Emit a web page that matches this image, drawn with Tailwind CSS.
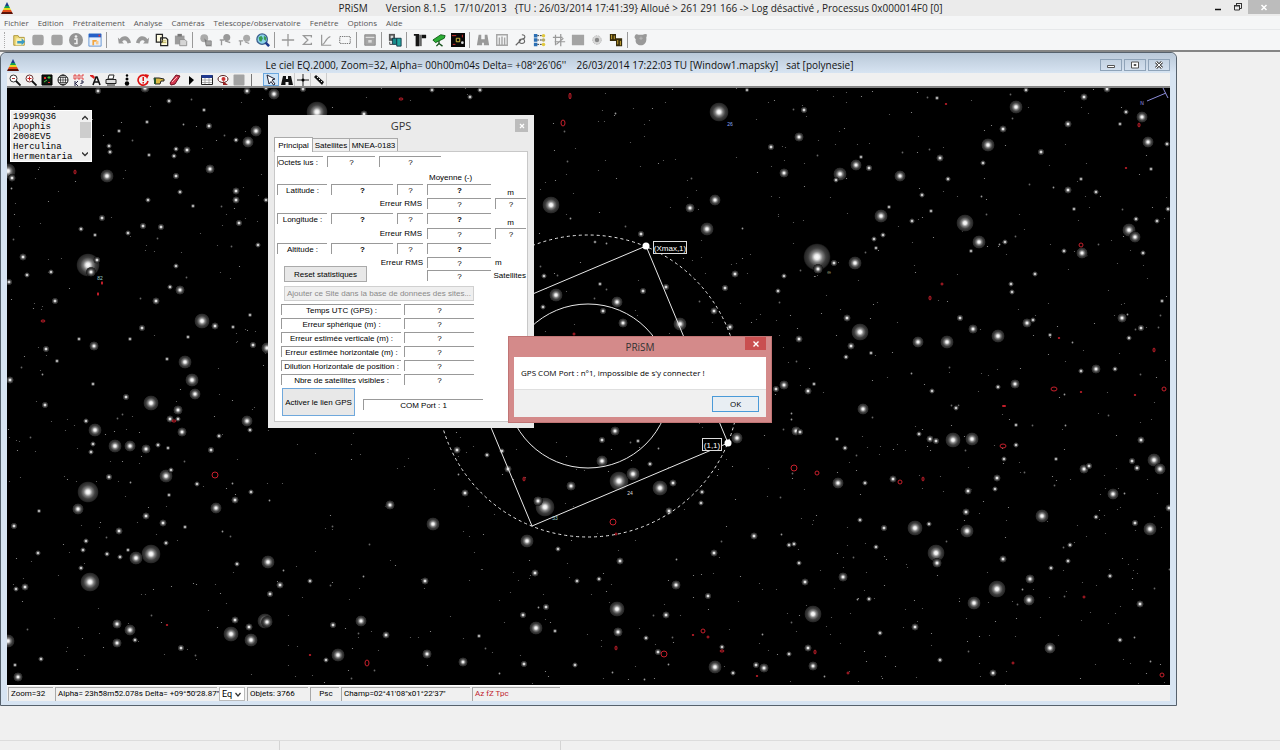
<!DOCTYPE html>
<html lang="fr">
  <head>
    <meta charset="UTF-8" />
    <meta name="viewport" content="width=device-width, initial-scale=1.0" />
    <title>PRiSM</title>
    <script src="https://cdn.jsdelivr.net/npm/@tailwindcss/browser@4"></script>
  </head>
  <body class="bg-[#f0f0f0] font-['Open_Sans','Noto_Sans',sans-serif] text-[#222]">
    <div class="flex h-screen flex-col overflow-hidden">
      <!-- Application title bar -->
      <header class="relative flex h-4 shrink-0 items-center bg-[#ebebeb]">
        <svg class="ml-px h-3 w-3" viewBox="0 0 12 12">
          <path d="M6 0L8 4H4z" fill="#173a8a" /><path d="M4 4h4l1 2H3z" fill="#15a050" /><path d="M3 6h6l1 2H2z" fill="#e8d820" /><path d="M2 8h8l1 2H1z" fill="#e04a1a" /><path d="M1 10h10l1 2H0z" fill="#5a1208" />
        </svg>
        <h1 class="flex-1 pr-3 text-center text-[10px] leading-4 whitespace-pre">PRiSM       Version 8.1.5   17/10/2013   {TU : 26/03/2014 17:41:39} Alloué > 261 291 166 -> Log désactivé , Processus 0x000014F0 [0]</h1>
        <div class="absolute top-0 right-0 flex h-[14px] items-stretch">
          <button aria-label="Réduire" class="flex w-5 items-center justify-center"><svg class="h-3 w-3" viewBox="0 0 12 12"><path d="M3 8.500h6" stroke="#111" stroke-width="1.500" /></svg></button>
          <button aria-label="Restaurer" class="flex w-5 items-center justify-center"><svg class="h-3 w-3" viewBox="0 0 12 12" fill="none" stroke="#333"><path d="M2.500 5h5v4h-5zM2 4.500h6M4.500 4V2.500h5v5H8M4 2.500h6" /></svg></button>
          <button aria-label="Fermer" class="flex w-8 items-center justify-center bg-[#bcbcbc]"><svg class="h-3 w-3" viewBox="0 0 12 12"><path d="M3.500 4l5 5m0-5l-5 5" stroke="#fff" stroke-width="1.500" /></svg></button>
        </div>
      </header>

      <!-- Menu -->
      <nav class="flex h-[14px] shrink-0 items-center gap-[9px] border-b border-[#e6e8ea] bg-[#f5f6f7] px-1 text-[8px] leading-3 text-[#555]">
        <a href="#">Fichier</a>
        <a href="#">Edition</a>
        <a href="#">Prétraitement</a>
        <a href="#">Analyse</a>
        <a href="#">Caméras</a>
        <a href="#">Telescope/observatoire</a>
        <a href="#">Fenêtre</a>
        <a href="#">Options</a>
        <a href="#">Aide</a>
      </nav>

      <!-- Main toolbar -->
      <div class="flex h-[22px] shrink-0 items-center border-b-2 border-[#858585] bg-[#f5f6f7] pl-1 [&>button]:flex [&>button]:w-[19px] [&>button]:justify-center [&_svg]:h-[14px] [&_svg]:w-[14px]">
        <span class="mr-1 h-4 border-l border-dotted border-[#aaa]"></span>
        <button aria-label="Ouvrir"><svg viewBox="0 0 16 16"><path d="M2 3h5l1 2h6v9H2z" fill="#ecd775" stroke="#a89030" /><path d="M5 6h9l-1 8H4z" fill="#f8efb0" /><path d="M6 9h5V6l4 4-4 4v-2H6z" fill="#3a9bc4" /></svg></button>
        <button aria-label="Enregistrer"><svg viewBox="0 0 16 16"><rect x="1.500" y="2" width="13" height="12" rx="2.500" fill="#a3a3a3" /></svg></button>
        <button aria-label="Tout enregistrer"><svg viewBox="0 0 16 16"><rect x="1.500" y="2" width="13" height="12" rx="2.500" fill="#a3a3a3" /></svg></button>
        <button aria-label="Informations"><svg viewBox="0 0 16 16"><circle cx="8" cy="8" r="8" fill="#949494" /><circle cx="8" cy="4" r="1.500" fill="#eee" /><path d="M6 7h3v5h1M6 12h4" stroke="#eee" stroke-width="1.800" fill="none" /></svg></button>
        <button aria-label="Calendrier"><svg viewBox="0 0 16 16"><path d="M1 1h14v14H1z" fill="#e8f0fb" stroke="#5b8fd0" /><path d="M1 1h14v4H1z" fill="#2560c8" /><path d="M12 2h2v2h-2z" fill="#e33" /><path d="M5 8h5v2H7v4H5z" fill="#f2a640" /><path d="M9 9h3v4H9z" fill="#f7c98c" /></svg></button>
        <span class="mr-[7px] ml-[2px] h-4 w-px bg-[#999]"></span>
        <button aria-label="Annuler"><svg viewBox="0 0 16 16"><path d="M1 5l1 7h6L6 10c2-3 5-2 6 2l4-1C14 2 6 2 3 7z" fill="#999" /></svg></button>
        <button aria-label="Rétablir"><svg viewBox="0 0 16 16"><path d="M15 5l-1 7H8l2-2c-2-3-5-2-6 2l-4-1C2 2 10 2 13 7z" fill="#999" /></svg></button>
        <button aria-label="Copier"><svg viewBox="0 0 16 16"><path d="M1.500 1.500h7v9h-7zM6.500 5.500h6l2 2v7h-8z" fill="#fffce0" stroke="#222" stroke-width="1.400" /><path d="M8 9h5M8 11h5" stroke="#b4a94a" /></svg></button>
        <button aria-label="Coller"><svg viewBox="0 0 16 16"><path d="M1 3h11v10H1z" fill="#9b9b9b" /><path d="M4 1h5v3H4z" fill="#777" /><path d="M6.500 7.500h6l2 2v5h-8z" fill="#d5d5d5" stroke="#8b8b8b" /></svg></button>
        <span class="mr-[3px] ml-[2px] h-4 w-px bg-[#999]"></span>
        <button aria-label="Détection"><svg viewBox="0 0 16 16"><circle cx="6" cy="6" r="4.500" fill="#aaa" /><path d="M6 6l9 9h-7z" fill="#777" /><path d="M8 9h6v5H8z" fill="#a5a5a5" stroke="#888" /></svg></button>
        <button aria-label="Photométrie"><svg viewBox="0 0 16 16"><circle cx="10" cy="5" r="4" fill="#999" /><path d="M7 8H2m2 0v6M8 9l6 2" fill="none" stroke="#999" stroke-width="1.500" /></svg></button>
        <button aria-label="Astrométrie"><svg viewBox="0 0 16 16"><circle cx="11" cy="6" r="4" fill="#aaa" /><path d="M7 9H2m2 0v5M9 10l5 2" fill="none" stroke="#999" stroke-width="1.500" /></svg></button>
        <button aria-label="Ciel"><svg viewBox="0 0 16 16"><circle cx="7" cy="7" r="6" fill="#8ad3ea" stroke="#3c5f8e" stroke-width="1.500" /><path d="M3 5l3-2 2 3-2 4-2-1zM9 3l3 2-1 4-2-2z" fill="#3c9d52" /><path d="M11 11l4 4" stroke="#1d3c8c" stroke-width="3" /></svg></button>
        <span class="mr-[3px] ml-[2px] h-4 w-px bg-[#999]"></span>
        <button aria-label="Croix"><svg viewBox="0 0 16 16"><path d="M8 1v14M1 8h14" stroke="#999" stroke-width="1.500" /></svg></button>
        <button aria-label="Somme"><svg viewBox="0 0 16 16"><path d="M13 5V3H4l5 5-5 5h9v-2" fill="none" stroke="#999" stroke-width="1.500" /></svg></button>
        <button aria-label="Courbe"><svg viewBox="0 0 16 16"><path d="M3 2v12h11M4 13c3 0 3-7 9-9" fill="none" stroke="#999" stroke-width="1.400" /></svg></button>
        <button aria-label="Sélection"><svg viewBox="0 0 16 16"><path d="M2 4h12v8H2z" fill="none" stroke="#777" stroke-dasharray="1.500 1" stroke-width="1.200" /></svg></button>
        <span class="mr-[3px] ml-[2px] h-4 w-px bg-[#999]"></span>
        <button aria-label="Archive"><svg viewBox="0 0 16 16"><path d="M2 2h12v12H2z" fill="#a5a5a5" stroke="#888" /><path d="M3 5h10" stroke="#eee" /><path d="M6 8h4v3H6z" fill="#ddd" /></svg></button>
        <span class="mr-[3px] ml-[2px] h-4 w-px bg-[#999]"></span>
        <button aria-label="Caméra"><svg viewBox="0 0 16 16"><path d="M1 1h7v8H1z" fill="#555" /><path d="M3 3h3v3H3z" fill="#ddd" /><path d="M5 6h5v7H5z" fill="#18898a" stroke="#134" /><path d="M10 6h5v9h-5z" fill="#21a79f" stroke="#134" /><path d="M2 10v3h3" fill="none" stroke="#333" /></svg></button>
        <span class="mr-[3px] ml-[2px] h-4 w-px bg-[#999]"></span>
        <button aria-label="Monture"><svg viewBox="0 0 16 16"><path d="M1 1h6v2H1zM3 3h4v12H3z" fill="#161616" /><path d="M7 2h3v13H7z" fill="#666" /><path d="M10 2h5v4h-5z" fill="#111" /></svg></button>
        <button aria-label="Télescope"><svg viewBox="0 0 16 16"><path d="M1 8l9-6 5 1-1 3-10 5z" fill="#2cae35" stroke="#0d5313" /><path d="M8 9v3m0 0l-3 3m3-3l4 3" stroke="#14501a" stroke-width="1.500" /></svg></button>
        <button aria-label="Guidage"><svg viewBox="0 0 16 16"><path d="M0 0h16v16H0z" fill="#080808" /><path d="M1 3h5M2 13h3M13 2v3" stroke="#e8322f" /><path d="M6 6h4v4H6z" fill="none" stroke="#e5cf45" /><circle cx="13" cy="11" r="1.500" fill="#ddd" /></svg></button>
        <span class="mr-[3px] ml-[2px] h-4 w-px bg-[#999]"></span>
        <button aria-label="Recherche"><svg viewBox="0 0 16 16"><path d="M3 2h3v5h4V2h3l2 12H9v-3H7v3H1z" fill="#999" /></svg></button>
        <button aria-label="Colonnes"><svg viewBox="0 0 16 16"><path d="M2 2h12v12H2zM5 5v9M8 4v10M11 5v9" fill="none" stroke="#a5a5a5" stroke-width="1.600" /></svg></button>
        <button aria-label="Outil"><svg viewBox="0 0 16 16"><path d="M9 2c5 0 4 5 0 5s-4 5 0 5 4-4 1-6M8 8l-6 6" fill="none" stroke="#666" stroke-width="1.300" /></svg></button>
        <button aria-label="Réseau"><svg viewBox="0 0 16 16"><path d="M1 1h4v4H1zM1 6h4v4H1zM1 11h4v4H1z" fill="#2b6fb4" /><path d="M5 3h6M5 8h6M5 13h6" stroke="#222" stroke-dasharray="2 1" /><circle cx="12" cy="3" r="2" fill="#e2c93e" /><circle cx="12" cy="8" r="2" fill="#b4aa68" /><circle cx="12" cy="13" r="2" fill="#e2c93e" /></svg></button>
        <button aria-label="Grille"><svg viewBox="0 0 16 16"><path d="M4 2v12M10 1v14M1 5h11M3 10h12M13 6l-8 7" stroke="#999" stroke-width="1.400" /></svg></button>
        <button aria-label="Image"><svg viewBox="0 0 16 16"><path d="M1 2h14v12H1z" fill="#a3a3a3" /></svg></button>
        <button aria-label="Dôme"><svg viewBox="0 0 16 16"><circle cx="8" cy="8" r="5" fill="#d7d7d7" stroke="#aaa" stroke-dasharray="1 1" /><circle cx="8" cy="8" r="2.500" fill="#888" /></svg></button>
        <button aria-label="Mosaïque"><svg viewBox="0 0 16 16"><path d="M1 1h7v8H1zM8 6h7v9H8z" fill="#372c0c" /><path d="M3 2v5m3-4v4m4 1v5m3-4v5" stroke="#d8b437" /></svg></button>
        <span class="mr-[3px] ml-[2px] h-4 w-px bg-[#999]"></span>
        <button aria-label="Aide"><svg viewBox="0 0 16 16"><path d="M1 3c1-2 3-2 4-1h5c2-1 4-1 5 0-1 1 0 2-1 3 1 5-2 9-6 9S1 11 2 7C1 6 0 5 1 3z" fill="#999" /><path d="M6 6h4M8 4v4" stroke="#bbb" /></svg></button>
      </div>

      <!-- Sky map window -->
      <main class="mr-[103px] mb-[34px] flex min-h-0 flex-1 flex-col rounded-t-md border border-[#56616c] bg-[#d7e4f2] px-[6px] pb-1">
        <div class="-mx-[6px] flex h-5 shrink-0 items-center rounded-t-md bg-linear-to-b from-[#b9c8d8] to-[#d7e4f2] px-[6px] pt-1">
          <svg class="h-3 w-3" viewBox="0 0 12 12">
            <path d="M6 0L8 4H4z" fill="#173a8a" /><path d="M4 4h4l1 2H3z" fill="#15a050" /><path d="M3 6h6l1 2H2z" fill="#e8d820" /><path d="M2 8h8l1 2H1z" fill="#e04a1a" /><path d="M1 10h10l1 2H0z" fill="#5a1208" />
          </svg>
          <h2 class="flex-1 text-center text-[10px] leading-4 whitespace-pre text-[#111]">Le ciel EQ.2000, Zoom=32, Alpha= 00h00m04s Delta= +08°26'06''    26/03/2014 17:22:03 TU [Window1.mapsky]   sat [polynesie]</h2>
          <div class="flex gap-[2px] [&>button]:flex [&>button]:h-3 [&>button]:w-[22px] [&>button]:items-center [&>button]:justify-center [&>button]:border [&>button]:border-[#8fa3b8] [&_svg]:h-[10px] [&_svg]:w-[10px]">
            <button aria-label="Réduire la carte"><svg viewBox="0 0 10 10"><path d="M1.500 5.500h7v2h-7z" fill="#fff" stroke="#555" /></svg></button>
            <button aria-label="Agrandir la carte"><svg viewBox="0 0 10 10"><path d="M1.500 2h7v6h-7z" fill="#fff" stroke="#555" /><path d="M4 4.500h2v1H4z" fill="#fff" stroke="#555" /></svg></button>
            <button aria-label="Fermer la carte"><svg viewBox="0 0 10 10"><path d="M2 2l6 6m0-6L2 8" stroke="#555" stroke-width="3" /><path d="M2 2l6 6m0-6L2 8" stroke="#fff" /></svg></button>
          </div>
        </div>

        <div class="flex h-[15px] shrink-0 items-center border-b-2 border-[#858585] bg-[#f0f0f0] [&>button]:flex [&>button]:h-[13px] [&>button]:w-4 [&>button]:items-center [&>button]:justify-center [&_svg]:h-3 [&_svg]:w-3">
          <button aria-label="Zoom arrière"><svg viewBox="0 0 12 12"><circle cx="4.500" cy="4.500" r="3.500" fill="#fff" stroke="#333" /><path d="M7 7l4.500 4.500" stroke="#111" stroke-width="1.800" /><path d="M3 4.500h3" stroke="#a33" /></svg></button>
          <button aria-label="Zoom avant"><svg viewBox="0 0 12 12"><circle cx="4.500" cy="4.500" r="3.500" fill="#fff" stroke="#633" /><path d="M7 7l4.500 4.500" stroke="#111" stroke-width="1.800" /><path d="M2.500 4.500h4m-2-2v4" stroke="#c22" /></svg></button>
          <button aria-label="Objets"><svg viewBox="0 0 12 12"><path d="M1 1h10v10H1z" fill="#101810" stroke="#000" /><path d="M3 3h2v2H3zM7 8h2v1H7z" fill="#e33" /><path d="M7 3h2v1H7zM3 8l3-2" fill="#4c4" stroke="#4c4" /></svg></button>
          <button aria-label="Grille céleste"><svg viewBox="0 0 12 12" fill="none" stroke="#111"><circle cx="6" cy="6" r="5" fill="#fff" /><path d="M1 6h10M6 1v10M2 3.500h8M2 8.500h8" stroke-width=".6" /><ellipse cx="6" cy="6" rx="2.500" ry="5" stroke-width=".7" /></svg></button>
          <button aria-label="Noms"><svg viewBox="0 0 12 12" fill="none"><path d="M1 1v4h2V1zM5 1h2v4H5zM11 1H9v4h2" stroke="#d22" stroke-width=".8" /><path d="M2 7v5m0-2l3-3m-2 3l2 2M8 7h2v2H8v1m0 1v1" stroke="#224" /></svg></button>
          <button aria-label="Annotation"><svg viewBox="0 0 12 12"><path d="M1 1h3l2 2-1 2-4-3z" fill="#d22" /><path d="M4 11l3-8h1l3 8M5 8h5" fill="none" stroke="#111" stroke-width="1.600" /></svg></button>
          <button aria-label="Imprimer"><svg viewBox="0 0 12 12"><path d="M4 1h5l-1 4H3z" fill="#fff" stroke="#222" /><path d="M1 5.500h10v4H1z" fill="#ddd" stroke="#222" /><path d="M2 11h8" stroke="#222" /></svg></button>
          <button aria-label="Magnitude"><svg viewBox="0 0 12 12"><circle cx="6" cy="1.500" r="1.200" /><circle cx="6" cy="5" r="1.500" /><circle cx="6" cy="9.500" r="2.200" /></svg></button>
          <button aria-label="Actualiser"><svg viewBox="0 0 12 12"><path d="M10 3a5 5 0 1 0 1 4" fill="none" stroke="#d11" stroke-width="1.600" /><path d="M8 0l4 1-2 4zM5.500 3h1.500v4h-1.500zM5.500 8h1.500v1.500h-1.500z" fill="#d11" /></svg></button>
          <button aria-label="Pointer"><svg viewBox="0 0 12 12"><path d="M1 4h5l5 1v2H8l-1 3H2z" fill="#d9b942" stroke="#222" /><path d="M1 4h2v6H1z" fill="#24542c" /></svg></button>
          <button aria-label="Effacer"><svg viewBox="0 0 12 12"><path d="M1 9l6-8 4 1-5 8-4 1z" fill="#d43a52" stroke="#701020" /><path d="M3 8l5-5" stroke="#fbb" /></svg></button>
          <button aria-label="Lecture"><svg viewBox="0 0 12 12"><path d="M4 2l5 4-5 5z" /></svg></button>
          <button aria-label="Tableau"><svg viewBox="0 0 12 12"><path d="M.5 1.500h11v9H.5z" fill="#fff" stroke="#222" /><path d="M.5 1h11v3H.5z" fill="#203a90" /><path d="M1 6h10M1 8.500h10M4 4v6M8 4v6" stroke="#999" stroke-width=".8" /></svg></button>
          <button aria-label="Oeil"><svg viewBox="0 0 12 12"><ellipse cx="6" cy="5" rx="5" ry="3.500" fill="#fff" stroke="#522" /><circle cx="6.500" cy="5" r="2" fill="#c33" /><path d="M6 7l5 4H6z" fill="#922" /></svg></button>
          <button aria-label="Arrêt"><svg viewBox="0 0 12 12"><rect x=".5" y=".5" width="11" height="11" rx="1" fill="#a3a3a3" /></svg></button>
          <span class="mr-[11px] ml-1 h-3 w-px bg-[#777]"></span>
          <button aria-label="Flèche" class="border border-[#6aa7df] bg-[#cfe4f7]"><svg viewBox="0 0 12 12"><path d="M2 1l8 4-3 1 3 4-1.500 1L6 7.500 4 10z" fill="#fff" stroke="#223" /></svg></button>
          <button aria-label="Jumelles" class="border-r border-[#ccc]"><svg viewBox="0 0 12 12"><path d="M2 2h3v3h2V2h3l2 9H7.500V8h-3v3H0z" fill="#111" /></svg></button>
          <button aria-label="Réticule" class="border-r border-[#ccc]"><svg viewBox="0 0 12 12"><path d="M6 0v12M0 6h12" stroke="#222" /><circle cx="6" cy="6" r="1.500" /></svg></button>
          <button aria-label="Mesure" class="border-r border-[#ccc]"><svg viewBox="0 0 12 12"><path d="M1 3l2-2 8 7-2 3z" fill="#111" /><path d="M4 4l1-1m1 3l1-1m1 3l1-1" stroke="#eee" /></svg></button>
        </div>

        <section class="relative min-h-0 flex-1 overflow-hidden bg-black">
          <svg id="sky" class="absolute inset-0 h-full w-full" viewBox="7 88 1163 597" preserveAspectRatio="xMinYMin slice">
            <defs>
              <radialGradient id="glow">
                <stop offset="0" stop-color="#fff" />
                <stop offset=".18" stop-color="#eaeaea" />
                <stop offset=".4" stop-color="#808080" />
                <stop offset=".65" stop-color="#3e3e3e" />
                <stop offset=".9" stop-color="#262626" />
                <stop offset="1" stop-color="#000" />
              </radialGradient>
            </defs>
            <g id="stars"></g>
            <g id="asteroids" fill="none" stroke="#c8202c"></g>
            <!-- Field of view -->
            <g fill="none" stroke="#e8e8e8">
              <circle cx="588" cy="386" r="82" />
              <circle cx="588" cy="386" r="151" stroke-dasharray="3 3" />
              <path d="M646 246L728 443L532 526L450 329Z" />
            </g>
            <g fill="#fff"><circle cx="646" cy="246" r="3.500" /><circle cx="728" cy="443" r="3.500" /></g>
            <g fill="#000" stroke="#ddd">
              <rect x="653.500" y="241.500" width="33" height="12" />
              <rect x="702.500" y="438.500" width="19" height="12" />
            </g>
            <g fill="#fff" font-family="Liberation Sans, sans-serif" font-size="8" text-anchor="middle">
              <text x="670" y="251">(Xmax,1)</text>
              <text x="712" y="448">(1,1)</text>
            </g>
            <g font-family="Liberation Sans, sans-serif" font-size="5" text-anchor="middle">
              <text x="100" y="280" fill="#9bd0d0">82</text>
              <text x="555" y="520" fill="#9bd0d0">33</text>
              <text x="630" y="495" fill="#ddd">24</text>
              <text x="730" y="126" fill="#88aaff">26</text>
              <text x="829" y="274" fill="#d8d8a0">∞</text>
              <text x="1142" y="105" fill="#9a9af0">N</text>
            </g>
            <path d="M1147 101L1166 93M1163 88L1168 98" stroke="#8c8cd8" fill="none" />
          </svg>

          <!-- Object list -->
          <div class="absolute top-[22px] left-[3px] flex h-[52px] w-[82px] border border-white bg-[#f0f0f0]">
            <ul class="flex-1 overflow-hidden pt-px pl-[2px] font-['Liberation_Mono',monospace] text-[9px] leading-[10px] text-black">
              <li>1999RQ36</li>
              <li>Apophis</li>
              <li>2008EV5</li>
              <li>Herculina</li>
              <li>Hermentaria</li>
            </ul>
            <div class="flex w-3 flex-col items-center justify-between py-1">
              <svg class="h-[6px] w-[6px]" viewBox="0 0 6 6"><path d="M0 4.500l3-3 3 3" fill="none" stroke="#333" stroke-width="1.400" /></svg>
              <span class="mb-3 h-4 w-[11px] bg-[#cdcdcd]"></span>
              <svg class="h-[6px] w-[6px]" viewBox="0 0 6 6"><path d="M0 1.500l3 3 3-3" fill="none" stroke="#333" stroke-width="1.400" /></svg>
            </div>
          </div>

          <!-- GPS window -->
          <div class="absolute top-[27px] left-[261px] flex h-[313px] w-[266px] flex-col bg-[#ebebeb] px-[6px] pb-[6px] font-['Liberation_Sans',sans-serif] text-[8px] leading-[11px] text-black">
            <div class="relative flex h-[21px] shrink-0 items-center justify-center">
              <h3 class="font-['Open_Sans',sans-serif] text-[11px] text-[#333]">GPS</h3>
              <button aria-label="Fermer GPS" class="absolute top-1 right-0 flex h-[13px] w-[13px] items-center justify-center bg-[#bcbcbc]"><svg class="h-2 w-2" viewBox="0 0 8 8"><path d="M2 2l4 4m0-4L2 6" stroke="#fff" stroke-width="1.300" /></svg></button>
            </div>
            <div class="flex h-[15px] shrink-0 items-end whitespace-nowrap">
              <button class="z-10 -mb-px h-[15px] w-[39px] border border-b-0 border-[#aaa] bg-white">Principal</button>
              <button class="h-[13px] w-[37px] border border-b-0 border-l-0 border-[#aaa] bg-[#f0f0f0]">Satellites</button>
              <button class="h-[13px] w-12 border border-b-0 border-l-0 border-[#aaa] bg-[#f0f0f0]">MNEA-0183</button>
            </div>
            <div class="min-h-0 flex-1 border border-[#c8c8c8] bg-white pt-1 pl-[2px] text-center whitespace-nowrap [&_output]:block [&_output]:h-[11px] [&_output]:border-t [&_output]:border-l [&_output]:border-[#999] [&_span]:h-[11px]">
              <div class="flex gap-1">
                <span class="w-[46px] border-t border-l border-[#999] text-left">Octets lus :</span>
                <output class="w-12">?</output>
                <output class="w-[62px]">?</output>
              </div>
              <div class="mt-1 h-[13px] pl-[152px] text-left leading-[13px]">Moyenne (-)</div>
              <div class="grid grid-cols-[50px_62px_26px_64px_31px] grid-rows-[14px_15px_15px_15px_14px_13px_12px] gap-x-1">
                <span class="border-t border-l border-[#999]">Latitude :</span>
                <output class="font-bold">?</output>
                <output>?</output>
                <output class="font-bold">?</output>
                <span class="self-end">m</span>
                <span class="col-span-3 pr-px text-right">Erreur RMS</span>
                <output>?</output>
                <output>?</output>
                <span class="border-t border-l border-[#999]">Longitude :</span>
                <output class="font-bold">?</output>
                <output>?</output>
                <output class="font-bold">?</output>
                <span class="self-end">m</span>
                <span class="col-span-3 pr-px text-right">Erreur RMS</span>
                <output>?</output>
                <output>?</output>
                <span class="border-t border-l border-[#999]">Altitude :</span>
                <output class="font-bold">?</output>
                <output>?</output>
                <output class="font-bold">?</output>
                <span></span>
                <button class="col-span-2 row-span-2 ml-[7px] h-4 w-[83px] self-end border border-[#aaa] bg-[#e8e8e8]">Reset statistiques</button>
                <span class="flex justify-end">Erreur RMS</span>
                <output>?</output>
                <span class="text-left">m</span>
                <output class="col-start-4">?</output>
                <span class="flex justify-end">Satellites</span>
              </div>
              <button disabled class="mt-1 mr-[52px] ml-[7px] block h-[15px] w-[190px] border border-[#d0d0d0] bg-[#efefef] text-[#8a8a8a]">Ajouter ce Site dans la base de donnees des sites...</button>
              <div class="mt-[3px] ml-1 grid auto-rows-[14px] grid-cols-[120px_70px] gap-x-[3px]">
                <span class="border-t border-l border-[#999]">Temps UTC (GPS) :</span><output>?</output>
                <span class="border-t border-l border-[#999]">Erreur sphérique (m) :</span><output>?</output>
                <span class="border-t border-l border-[#999]">Erreur estimée verticale (m) :</span><output>?</output>
                <span class="border-t border-l border-[#999]">Erreur estimée horizontale (m) :</span><output>?</output>
                <span class="border-t border-l border-[#999]">Dilution Horizontale de position :</span><output>?</output>
                <span class="border-t border-l border-[#999]">Nbre de satellites visibles :</span><output>?</output>
              </div>
              <div class="ml-[5px] flex items-center gap-2">
                <button class="h-7 w-[73px] border border-[#6fa8dc] bg-[#e8e8e8]">Activer le lien GPS</button>
                <output class="mt-1 w-[120px]">COM Port : 1</output>
              </div>
            </div>
          </div>

          <!-- Error message -->
          <div role="dialog" aria-label="PRiSM" class="absolute top-[248px] left-[501px] flex h-[87px] w-[264px] flex-col border border-[#c07474] bg-[#d48a8a] px-[5px] pb-[5px]">
            <div class="relative flex h-5 shrink-0 items-center justify-center">
              <h3 class="text-[10px] leading-4 text-[#333]">PRiSM</h3>
              <button aria-label="Fermer le message" class="absolute top-0 right-0 flex h-[13px] w-[21px] items-center justify-center bg-[#c94f50]"><svg class="h-2 w-2" viewBox="0 0 8 8"><path d="M1.500 1.500l5 5m0-5l-5 5" stroke="#fff" stroke-width="1.400" /></svg></button>
            </div>
            <p class="flex flex-1 items-center bg-white px-[7px] text-[8px] text-black">GPS COM Port : n°1, impossible de s'y connecter !</p>
            <div class="flex h-7 items-center justify-end border-t border-[#dfdfdf] bg-[#f0f0f0] pr-[7px]">
              <button class="h-4 w-[47px] border border-[#4a9ad8] bg-[#e8eef3] text-[8px] leading-3 text-black">OK</button>
            </div>
          </div>
        </section>

        <!-- Map status bar -->
        <footer class="flex h-4 shrink-0 items-end gap-[2px] border-t border-white bg-[#f0f0f0] pl-px font-['Roboto','Liberation_Sans',sans-serif] text-[8px] leading-3 whitespace-nowrap text-black [&>span]:h-[14px] [&>span]:border-t [&>span]:border-l [&>span]:border-[#a8a8a8] [&>span]:pl-[2px]">
          <span class="w-[45px]">Zoom=32</span>
          <span class="w-[162px]">Alpha= 23h58m52.078s Delta= +09°50'28.87''</span>
          <label class="relative flex h-[14px] w-[26px] items-center border border-[#bbb] bg-white">
            <select aria-label="Coordonnées" class="w-full appearance-none pl-[2px] text-[9px] leading-3"><option>Eq</option></select>
            <svg class="pointer-events-none absolute right-[3px] h-[5px] w-[6px]" viewBox="0 0 6 5"><path d="M.5 1L3 4l2.500-3" fill="none" stroke="#333" stroke-width="1.200" /></svg>
          </label>
          <span class="w-[61px]">Objets: 3766</span>
          <span class="w-[29px] text-center">Psc</span>
          <span class="w-[129px]">Champ=02°41'08"x01°22'37"</span>
          <span class="w-[88px] text-[#c0202c]">Az fZ Tpc</span>
        </footer>
      </main>

      <!-- Application status bar -->
      <footer class="flex h-[10px] shrink-0 border-t border-[#dcdcdc]">
        <span class="w-[280px] border-r border-[#d4d4d4]"></span>
        <span class="w-[281px] border-r border-[#d4d4d4]"></span>
      </footer>
    </div>

    <script>
      // x, y, radius of the catalogued stars
      const stars = `
        8,171,7 12,178,3 107,176,6 176,176,2.5 210,169,4 180,192,2 148,200,2 193,206,1.5 236,191,3 236,200,3 266,200,2 239,223,2.5
        102,218,2.5 81,229,2 95,235,1.5 128,233,2 143,226,2.5 161,227,2.5 23,257,3 88,265,11 97,260,2.5 91,272,4 51,272,2 27,275,2
        9,282,2.5 55,301,2.5 176,266,2 258,245,2 170,287,2 180,290,4 156,301,3 202,321,7 215,326,3 233,327,1.5 250,315,1.5 253,345,2.5
        267,348,5 142,328,2.5 188,337,1.5 130,339,1.5 79,339,1.5 94,346,4 46,349,2.5 57,361,1.5 167,359,1.5 185,362,6 192,380,6
        195,394,5 178,410,4 170,419,3 178,419,2 182,432,4 151,403,7 126,397,2.5 10,380,3 93,384,1.5 45,405,2.5 86,421,2 95,430,6
        115,446,6 130,446,5 146,449,4 158,445,2 168,448,1.5 93,444,2 91,452,2 247,421,5 250,430,2 219,436,2 211,450,2.5 166,476,6
        171,470,2 109,477,2.5 197,484,2 88,492,10 78,509,5 169,495,1.5 216,508,5 235,500,3 251,492,2 39,511,1.5 14,526,2.5 146,516,3
        163,523,3 185,527,1.5 119,531,3 86,541,2 166,543,2 83,550,2 38,553,2 128,550,1.5 151,554,9 136,558,6 120,557,2 107,554,2
        16,589,2 25,587,3 81,568,2 90,582,9 268,562,6 237,564,2 280,585,3 270,594,2.5 310,581,2 117,624,4 130,630,5 117,643,4
        135,640,2 8,641,6 18,677,4 41,659,2 15,665,1.5 181,648,2.5 235,620,3 249,627,3 231,634,7 251,640,6 265,621,7 267,622,5
        333,625,2.5 361,621,5 386,635,3 338,655,6 326,660,2 425,581,3 535,573,3 577,581,2 599,579,2 620,561,3 546,607,2.5 523,615,2.5
        536,628,6 617,609,7 618,632,4 676,585,4 708,596,2.5 666,615,3 646,638,2 658,652,2.5 555,631,1.5 479,636,1.5 427,654,4
        463,662,4 524,664,2.5 575,665,2 715,667,6 733,673,2 756,665,2.5 764,668,4 722,647,2 805,582,3 813,614,8 808,648,3 813,666,4
        789,654,2 799,563,2 615,431,4 602,440,2.5 602,461,5 571,486,4 619,481,9 633,474,6 660,488,7 673,483,3 650,464,2 638,441,1.5
        737,438,5 669,511,3 701,503,2 702,492,2 714,553,3 754,536,3 527,541,6 545,507,9 538,501,4 457,450,3 487,455,2 502,451,2
        508,469,3 465,493,3 433,524,6 558,549,2 390,505,4 641,234,2.5 707,229,6 556,295,6 617,302,5 623,323,4 603,311,2.5 544,276,2
        643,291,2.5 666,287,2.5 680,324,6 714,311,3 730,327,3 725,288,2.5 735,274,3 784,276,2 778,291,2 784,385,4 776,389,2.5
        600,284,1.5 543,307,2 595,242,1 98,91,2.5 145,88,4 169,101,2 204,110,1.5 147,122,1.5 119,131,1.5 209,126,2.5 256,131,5
        248,142,5 236,140,2 109,146,2 110,152,2 149,155,1.5 176,149,2 187,150,3 174,156,2 247,91,3 274,94,5 266,88,2 303,89,2.5
        317,112,10 364,114,3 432,90,2 480,90,2 470,97,2 719,112,9 551,205,8 690,208,4 715,200,5 747,90,1.5 937,98,1.5 1107,89,3
        1084,97,3 1026,90,2 1016,107,6 804,110,2.5 1068,124,3 1003,129,3 988,145,6 1041,152,2.5 1126,112,2 1142,117,5 1120,124,1.5
        1148,142,5 1167,144,2 799,137,4 771,147,2.5 856,165,5 869,168,2.5 840,174,6 836,180,2 784,173,4 900,176,5 940,158,3 983,163,2
        948,179,2 922,195,2 861,157,1.5 1068,190,3 1096,192,2 1081,179,1.5 1151,169,1.5 889,207,1.5 881,216,6 912,221,2 931,211,1.5
        965,223,8 979,242,6 1005,242,2 874,239,2 883,235,2 876,248,1.5 817,257,13 818,269,4 834,263,2.5 855,263,6
        971,251,1.5 1074,209,1.5 1136,219,2 1157,221,2 1129,230,6 1135,237,5 1143,253,2 1064,251,2 1082,253,5 1035,274,2 1011,284,2
        1012,292,2 1168,209,2 1162,301,1.5 847,318,3 860,332,8 851,346,3 846,357,2 799,339,3 871,353,1.5 918,342,5 947,342,6 973,329,4
        998,336,6 960,318,2.5 1027,323,4 1033,320,2 1050,335,1.5 1122,318,4 1141,328,2.5 1129,338,2 1096,369,4 1115,369,2 1081,371,2
        1015,384,4 998,387,2 932,391,2 814,384,1.5 808,391,3 863,409,5 956,408,2 796,431,4 800,432,2.5 845,448,2 837,439,1.5 919,434,2
        930,439,3 936,441,2.5 953,440,7 972,439,6 1016,425,1.5 1016,445,2 1004,459,2 1056,459,1.5 1141,440,3 1132,461,2.5 1154,460,6
        1160,469,5 1137,468,2.5 1084,469,4 1089,466,2.5 838,483,5 865,483,2 893,479,3 997,478,3 995,489,2 968,491,3 1113,494,5
        966,512,3 915,528,7 884,528,2.5 929,524,2 967,531,6 1042,516,6 1096,517,2 1135,523,2.5 1150,529,6 1169,508,3 876,547,2
        860,520,2 936,553,8 937,563,4 794,544,2 789,545,2 843,577,4 1003,559,3 997,589,8 1030,579,4 1070,545,2 1068,561,2
        1110,576,2 1051,568,2 869,599,2 974,603,6 1029,600,5 915,627,3 880,633,2 1050,648,5 993,673,3 1140,604,3 1120,640,2 940,660,2`;

      // x, y, rx, ry of the asteroid tracks
      const asteroids = `
        75,172,1,2 43,321,2,1 174,421,2,1 215,475,3,3 102,283,0.5,1.5 98,294,0.5,1.5 167,625,1,0.5 310,655,1,0.5 367,663,2,3 616,648,1,2
        664,654,3,3 693,635,1,0.5 703,631,2,2 708,637,1,1 722,651,2,1 757,676,1,0.5 815,652,1,2 524,479,1,2 613,522,3,3 616,534,1,1
        574,334,1,1 570,96,1,3 563,123,2,3 401,99,2,1 946,104,1,0.5 1139,125,1,2 1126,168,1,0.5 1081,245,2,2 942,284,1,1 930,298,1,2
        1059,338,1,0.5 1154,350,1,2 1054,389,3,2 1081,392,1,0.5 1135,395,1,0.5 1164,389,2,2 1004,406,2,0.5 1003,446,3,2 794,468,3,3
        817,473,2,2 900,482,2,2 923,479,1,2 1084,597,1,1 1013,663,1,1 1162,675,2,2 848,673,1,1`;

      const svgNs = "http://www.w3.org/2000/svg";

      function draw(parent, tag, attributes) {
        const node = document.createElementNS(svgNs, tag);
        for (const name in attributes) {
          node.setAttribute(name, attributes[name]);
        }
        parent.appendChild(node);
      }

      const starLayer = document.getElementById("stars");
      const asteroidLayer = document.getElementById("asteroids");

      // Faint background stars, same field on every load
      let seed = 3766;
      function random() {
        seed = (seed * 16807) % 2147483647;
        return seed / 2147483647;
      }
      for (let i = 0; i < 1000; i++) {
        draw(starLayer, "circle", {
          cx: Math.floor(7 + random() * 1163) + 0.5,
          cy: Math.floor(88 + random() * 597) + 0.5,
          r: random() < 0.85 ? 0.6 : 0.9,
          fill: random() < 0.7 ? "#666" : "#999",
        });
      }

      stars.trim().split(/\s+/).forEach((entry) => {
        const [cx, cy, r] = entry.split(",");
        draw(starLayer, "circle", { cx, cy, r: Number(r) + 0.8, fill: "url(#glow)" });
      });

      asteroids.trim().split(/\s+/).forEach((entry) => {
        const [cx, cy, rx, ry] = entry.split(",");
        draw(asteroidLayer, "ellipse", { cx, cy, rx, ry });
      });
    </script>
  </body>
</html>
